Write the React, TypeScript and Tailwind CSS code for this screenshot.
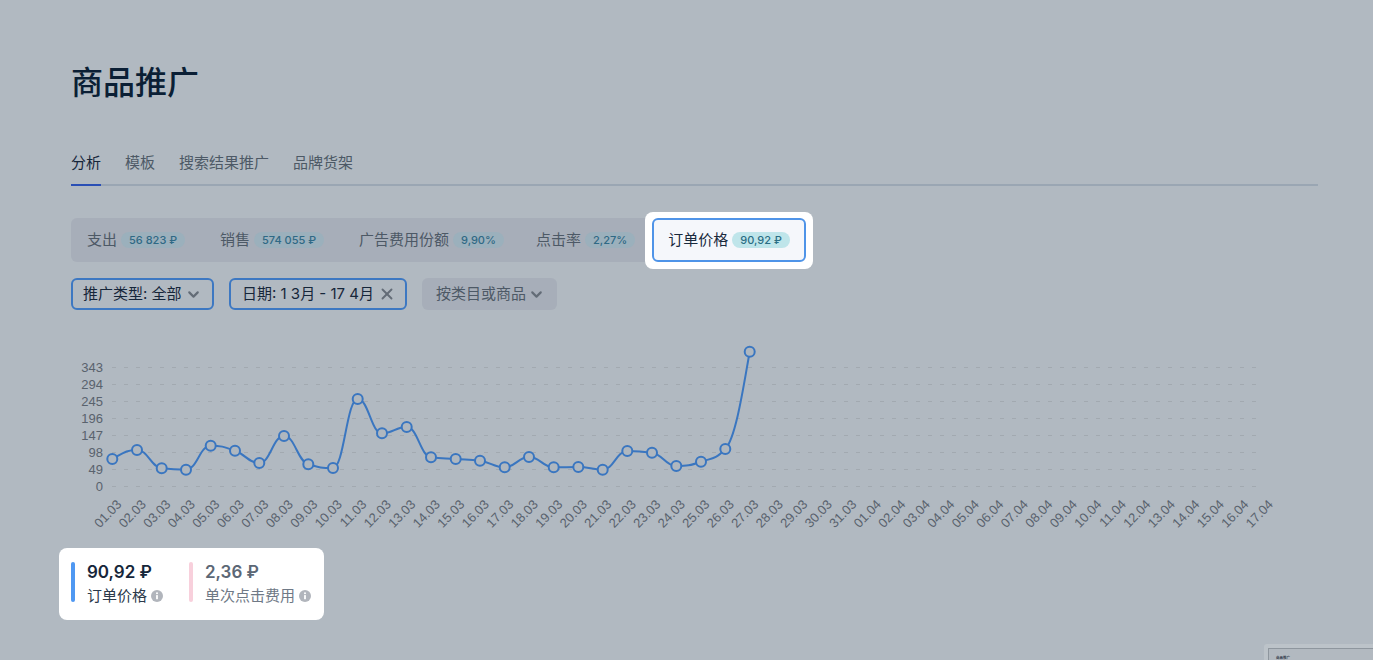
import { ChevronDown, X } from "lucide-react";

const FONT = "font-['Inter','Noto_Sans_CJK_SC',sans-serif]";

const points: [number, number][] = [
  [112.3, 459], [137, 450], [161.7, 468.3], [186, 469.7], [210.7, 445.7], [235, 450.7],
  [259.3, 463], [284, 436], [308.3, 464.3], [333, 468], [357.7, 399], [382, 433.3],
  [406.7, 427], [431, 457.3], [455.7, 459], [480, 460.7], [504.7, 467.3], [529, 457],
  [553.7, 467.3], [578.3, 467], [602.7, 469.7], [627.3, 451], [652, 452.7], [676.3, 466],
  [701, 461.7], [725.3, 449], [749.7, 351.7],
];

const yTicks = [343, 294, 245, 196, 147, 98, 49, 0];

const pad = (n: number) => String(n).padStart(2, "0");
const dates = [
  ...Array.from({ length: 31 }, (_, i) => `${pad(i + 1)}.03`),
  ...Array.from({ length: 17 }, (_, i) => `${pad(i + 1)}.04`),
];

// monotone cubic with long handles, same shape as the chart lib's smooth line
const smoothPath = (pts: [number, number][]) => {
  const n = pts.length;
  const slopes: number[] = [];
  for (let i = 0; i < n - 1; i++) slopes.push((pts[i + 1][1] - pts[i][1]) / (pts[i + 1][0] - pts[i][0]));
  const t: number[] = [0];
  for (let i = 1; i < n - 1; i++) {
    const a = slopes[i - 1];
    const b = slopes[i];
    t.push((Math.sign(a) + Math.sign(b)) * Math.min(Math.abs(a), Math.abs(b), 0.25 * Math.abs(a + b)));
  }
  t.push((3 * slopes[n - 2] - t[n - 2]) / 2);
  t[0] = (3 * slopes[0] - t[1]) / 2;
  let d = `M${pts[0][0]},${pts[0][1]}`;
  for (let i = 0; i < n - 1; i++) {
    const h = (pts[i + 1][0] - pts[i][0]) * 0.45;
    const e = i === n - 2 ? h * 0.5 : h;
    d += `C${pts[i][0] + h},${pts[i][1] + h * t[i]} ${pts[i + 1][0] - e},${pts[i + 1][1] - e * t[i + 1]} ${pts[i + 1][0]},${pts[i + 1][1]}`;
  }
  return d;
};

const Metric = ({ label, value, className }: { label: string; value: string; className: string }) => (
  <div className={`flex items-center gap-[4px] text-[15px] text-[#4d5966] ${className}`}>
    <span>{label}</span>
    <span className="h-[16px] rounded-full bg-[#9bb0bc] px-[8px] text-[11px] leading-[16px] font-medium text-[#2f6985]">{value}</span>
  </div>
);

const InfoDot = () => (
  <svg width="12" height="12" viewBox="0 0 12 12" className="shrink-0">
    <circle cx="6" cy="6" r="6" fill="#b1b5bc" />
    <circle cx="6" cy="3.3" r="1" fill="#fff" />
    <rect x="5.1" y="5" width="1.8" height="4.2" rx="0.5" fill="#fff" />
  </svg>
);

const Chart = () => (
  <svg width="1373" height="210" viewBox="0 330 1373 210" className="block font-['Liberation_Sans',sans-serif]">
    {yTicks.map((tick, i) => {
      const y = 367.5 + i * 17;
      return (
        <g key={tick}>
          <line x1="112" x2="1258" y1={y} y2={y} stroke="#a2a9b0" strokeDasharray="4 8" />
          <text x="103" y={y + 4} textAnchor="end" fontSize="13" fill="#59626d">{tick}</text>
        </g>
      );
    })}
    {dates.map((d, i) => {
      const x = 112.3 + i * 24.5;
      return (
        <text key={d} x={x + 10} y={505} textAnchor="end" fontSize="13" fill="#59626d" transform={`rotate(-46 ${x + 10} 505)`}>{d}</text>
      );
    })}
    <path d={smoothPath(points)} fill="none" stroke="#3a76c0" strokeWidth="2" />
    {points.map(([x, y]) => (
      <circle key={x} cx={x} cy={y} r="5" fill="#afb7bf" stroke="#3a76c0" strokeWidth="2" />
    ))}
  </svg>
);

export default function App() {
  return (
    <div className={`relative h-[660px] w-[1373px] overflow-hidden bg-[#b1b9c1] ${FONT}`}>
      <div className="px-[71px] pt-[62px]">
        <h1 className="text-[32px] leading-[42px] font-medium text-[#0b1f35]">商品推广</h1>

        <div className="mt-[41px] mr-[-16px] flex h-[41px] gap-[24px] border-b-2 border-[#9aa6b3] text-[15px] leading-[36px] text-[#4d5966]">
          <div className="h-[41px] border-b-2 border-[#2a4fb5] text-[#16263a]">分析</div>
          <div>模板</div>
          <div>搜索结果推广</div>
          <div>品牌货架</div>
        </div>

        <div className="relative mt-[32px] flex h-[44px] w-[582px] items-center rounded-[6px] bg-[#a7aeb9] pl-[16px]">
          <Metric label="支出" value="56 823 ₽" className="w-[133px]" />
          <Metric label="销售" value="574 055 ₽" className="w-[139px]" />
          <Metric label="广告费用份额" value="9,90%" className="w-[177px]" />
          <Metric label="点击率" value="2,27%" className="" />
          <div className="absolute top-[-6px] left-[574px] rounded-[8px] bg-white px-[7px] pt-[6px] pb-[7px]">
            <div className="flex h-[44px] w-[154px] items-center justify-center gap-[4px] rounded-[6px] border-2 border-[#4f94e8] bg-[#f5f7fb] text-[15px] text-[#1a2a3d]">
              <span>订单价格</span>
              <span className="h-[16px] rounded-full bg-[#bfe5ea] px-[8px] text-[11px] leading-[16px] font-medium text-[#2a6d84]">90,92 ₽</span>
            </div>
          </div>
        </div>

        <div className="mt-[16px] flex gap-[15px] text-[15px] leading-[32px]">
          <div className="flex h-[32px] w-[143px] items-center justify-between rounded-[6px] border-2 border-[#3d78c2] pr-[10px] pl-[10px] text-[#16263a]">
            <span>推广类型: 全部</span>
            <ChevronDown size={17} strokeWidth={3} className="text-[#636c77]" />
          </div>
          <div className="flex h-[32px] w-[178px] items-center justify-between rounded-[6px] border-2 border-[#3d78c2] pr-[9px] pl-[11px] text-[#16263a]">
            <span>日期: 1 3月 - 17 4月</span>
            <X size={18} strokeWidth={2.5} className="text-[#636c77]" />
          </div>
          <div className="flex h-[32px] w-[135px] items-center justify-between rounded-[6px] bg-[#a7aeb9] pr-[12px] pl-[14px] text-[#4d5966]">
            <span>按类目或商品</span>
            <ChevronDown size={17} strokeWidth={3} className="text-[#636c77]" />
          </div>
        </div>
      </div>

      <div className="mt-[20px]">
        <Chart />
      </div>

      <div className="mt-[8px] ml-[59px] flex h-[72px] w-[265px] rounded-[8px] bg-white py-[14px] pl-[12px]">
        <div className="flex w-[118px] gap-[12px]">
          <div className="h-[40px] w-[4px] rounded-full bg-[#4f98f2]" />
          <div>
            <div className="text-[17px] leading-[20px] font-semibold text-[#16263a]">90,92 ₽</div>
            <div className="mt-[4px] flex items-center gap-[4px] text-[15px] leading-[20px] text-[#2c3a4b]">
              订单价格
              <InfoDot />
            </div>
          </div>
        </div>
        <div className="flex gap-[12px]">
          <div className="h-[40px] w-[4px] rounded-full bg-[#f8d0dc]" />
          <div>
            <div className="text-[17px] leading-[20px] font-semibold text-[#5c6775]">2,36 ₽</div>
            <div className="mt-[4px] flex items-center gap-[4px] text-[15px] leading-[20px] text-[#6f7986]">
              单次点击费用
              <InfoDot />
            </div>
          </div>
        </div>
      </div>

      {/* thumbnail peeking in at the bottom right */}
      <div className="absolute top-[644px] left-[1264px] h-[40px] w-[130px] rounded-[3px] bg-[#bcc3c9] pt-[4px] pl-[4px]">
        <div className="h-full rounded-[1px] border-t border-l border-[#8e969e] bg-[#b2b9c0] pt-[7px] pl-[7px] text-[3.5px] leading-[4px] font-bold text-[#3b4654]">商品推广</div>
      </div>
    </div>
  );
}
